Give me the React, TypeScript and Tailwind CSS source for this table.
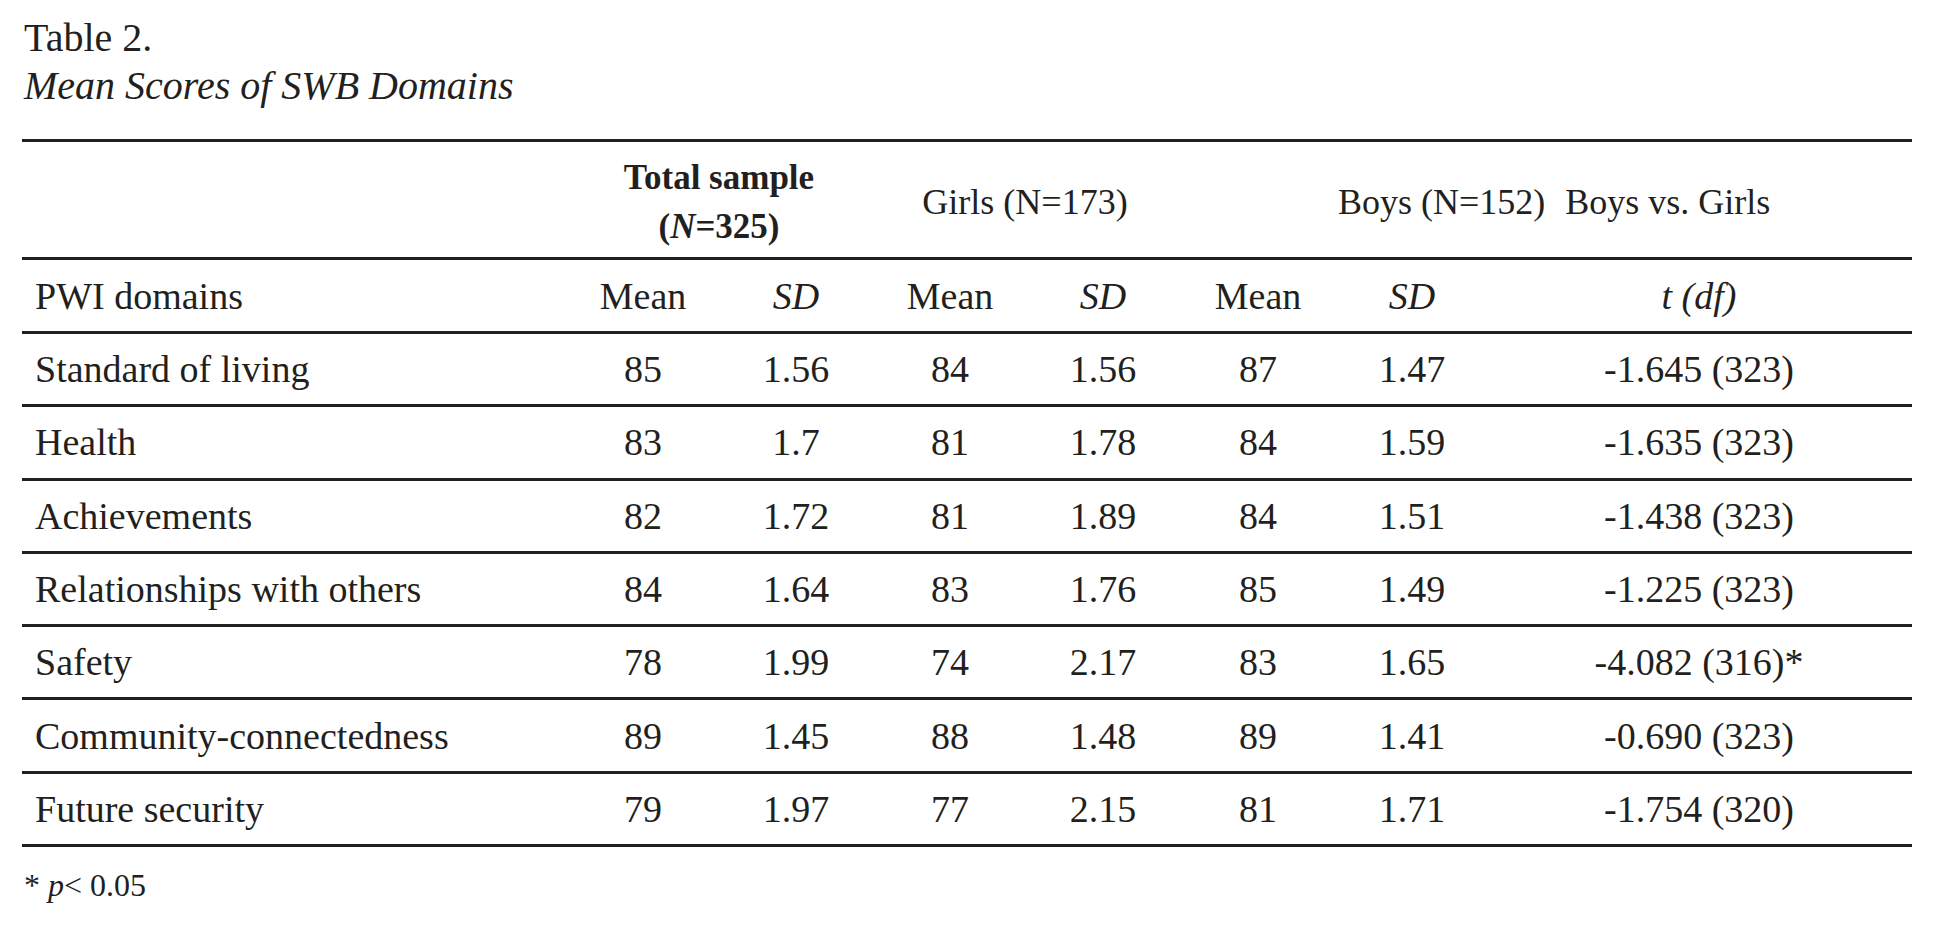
import React from "react";

const rows = [
  ["Standard of living", "85", "1.56", "84", "1.56", "87", "1.47", "-1.645 (323)"],
  ["Health", "83", "1.7", "81", "1.78", "84", "1.59", "-1.635 (323)"],
  ["Achievements", "82", "1.72", "81", "1.89", "84", "1.51", "-1.438 (323)"],
  ["Relationships with others", "84", "1.64", "83", "1.76", "85", "1.49", "-1.225 (323)"],
  ["Safety", "78", "1.99", "74", "2.17", "83", "1.65", "-4.082 (316)*"],
  ["Community-connectedness", "89", "1.45", "88", "1.48", "89", "1.41", "-0.690 (323)"],
  ["Future security", "79", "1.97", "77", "2.15", "81", "1.71", "-1.754 (320)"],
];

const cols = "grid grid-cols-[544px_154px_152px_156px_150px_160px_148px_1fr]";

export default function App() {
  return (
    <div className="min-h-screen w-full bg-white text-[#231f20] font-['Liberation_Serif','Times_New_Roman',serif] pl-[22px] pt-[14px]">
      {/* CAPTION */}
      <div className="text-[40px] leading-[48px] pl-[2px]">
        <p>Table 2.</p>
        <p className="italic">Mean Scores of SWB Domains</p>
      </div>

      {/* TABLE */}
      <div className="w-[1890px] mt-[29px] border-t-[3px] border-[#231f20]">
        {/* group header */}
        <div className={`${cols} h-[118px] border-b-[3px] border-[#231f20] text-[36px] leading-none`}>
          <div />
          <div className="col-span-2 flex flex-col items-center justify-center pt-[4px] font-bold text-[35px] leading-[49px]">
            <span>Total sample</span>
            <span>
              (<span className="italic">N</span>=325)
            </span>
          </div>
          <div className="col-span-2 flex items-center justify-center pt-[4px]">Girls (N=173)</div>
          <div className="col-span-3 flex items-center pl-[160px] pt-[4px] gap-[20px]">
            <span>Boys (N=152)</span>
            <span>Boys vs. Girls</span>
          </div>
        </div>

        {/* column header */}
        <div className={`${cols} h-[74px] border-b-[3px] border-[#231f20] text-[38px] leading-none`}>
          <div className="flex items-center pl-[13px]">PWI domains</div>
          <div className="flex items-center justify-center">Mean</div>
          <div className="flex items-center justify-center italic">SD</div>
          <div className="flex items-center justify-center">Mean</div>
          <div className="flex items-center justify-center italic">SD</div>
          <div className="flex items-center justify-center">Mean</div>
          <div className="flex items-center justify-center italic">SD</div>
          <div className="flex items-center justify-center italic">t (df)</div>
        </div>

        {rows.map((r, i) => (
          <div
            key={i}
            className={`${cols} h-[73.3px] border-b-[3px] border-[#231f20] text-[38px] leading-none`}
          >
            {r.map((c, j) => (
              <div
                key={j}
                className={j === 0 ? "flex items-center pl-[13px]" : "flex items-center justify-center"}
              >
                {c}
              </div>
            ))}
          </div>
        ))}
      </div>

      {/* NOTE */}
      <p className="text-[32px] leading-none mt-[22px] pl-[2px]">
        * <span className="italic">p</span>&lt; 0.05
      </p>
    </div>
  );
}
